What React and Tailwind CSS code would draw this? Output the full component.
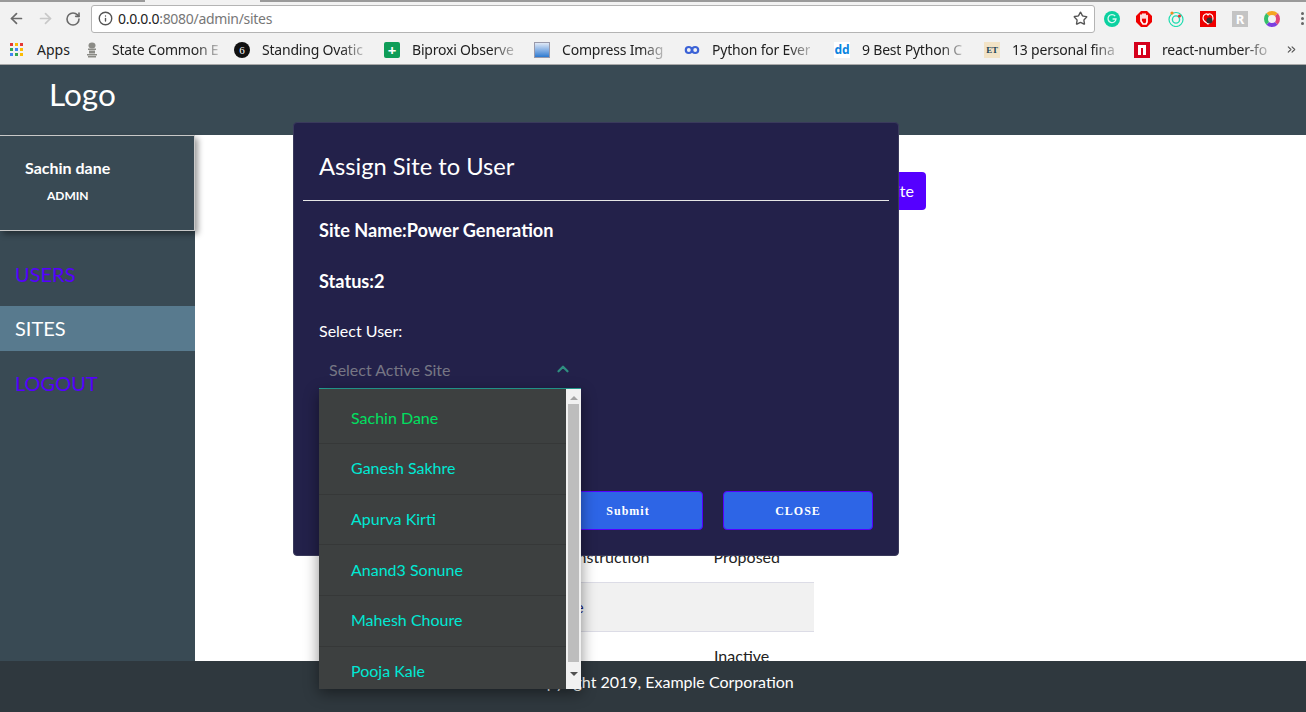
import React from 'react'
import { ArrowLeft, ArrowRight, RotateCw, Info, Star, ChevronUp, ChevronsRight } from 'lucide-react'

const bookmarks = [
  { label: 'State Common E', icon: <Emblem /> },
  { label: 'Standing Ovatic', icon: <span className="w-4 h-4 rounded-full bg-[#111] text-white text-[11px] leading-4 text-center font-['Liberation_Serif',serif]">6</span> },
  { label: 'Biproxi Observe', icon: <span className="w-4 h-4 rounded-[2px] bg-[#0f9d58] text-white text-[15px] leading-4 text-center font-bold">+</span> },
  { label: 'Compress Imag', icon: <span className="w-4 h-4 border border-[#99a] bg-gradient-to-b from-[#dfe8f5] to-[#2a7ad0]" /> },
  { label: 'Python for Ever', icon: <Loop /> },
  { label: '9 Best Python C', icon: <span className="w-4 h-4 bg-white text-[#0a84e0] text-[12px] leading-4 font-bold text-center">dd</span> },
  { label: '13 personal fina', icon: <span className="w-4 h-4 bg-[#f2e3c6] text-[#245] text-[9px] leading-4 font-bold text-center font-['Liberation_Serif',serif]">ET</span> },
  { label: 'react-number-fo', icon: <span className="w-4 h-4 bg-[#d5001c] flex items-center justify-center"><span className="w-2 h-2.5 border-x-[3px] border-t-[3px] border-white" /></span> },
]

const users = ['Ganesh Sakhre', 'Apurva Kirti', 'Anand3 Sonune', 'Mahesh Choure', 'Pooja Kale']

function Emblem() {
  return (
    <svg width="16" height="16" viewBox="0 0 16 16" fill="#8b8b86">
      <ellipse cx="8" cy="3.5" rx="3.5" ry="3" />
      <rect x="4" y="6.5" width="8" height="1.5" />
      <rect x="5" y="8.5" width="6" height="3" />
      <rect x="3" y="12" width="10" height="1.5" />
      <rect x="4" y="14" width="8" height="1.5" />
    </svg>
  )
}

function Loop() {
  return (
    <svg width="16" height="16" viewBox="0 0 16 16" fill="none" stroke="#3b62d6" strokeWidth="2.2">
      <circle cx="4.8" cy="8" r="3" />
      <circle cx="11.2" cy="8" r="3" />
    </svg>
  )
}

function AppsGrid() {
  const colors = ['#e53935', '#fbbc05', '#e53935', '#34a853', '#4285f4', '#fbbc05', '#4285f4', '#34a853', '#fbbc05']
  return (
    <span className="grid grid-cols-3 gap-[2px] w-[13px]">
      {colors.map((c, i) => (
        <span key={i} className="w-[3px] h-[3px]" style={{ backgroundColor: c }} />
      ))}
    </span>
  )
}

function Extensions() {
  return (
    <div className="flex items-center gap-[16px] ml-[9px] shrink-0">
      <svg width="16" height="16" viewBox="0 0 16 16">
        <circle cx="8" cy="8" r="8" fill="#0bd1a0" />
        <path d="M11.2 5.2A4 4 0 1 0 12 8H8.6" fill="none" stroke="#fff" strokeOpacity="0.85" strokeWidth="1.3" />
      </svg>
      <svg width="16" height="16" viewBox="0 0 16 16">
        <path d="M5 0h6l5 5v6l-5 5H5l-5-5V5z" fill="#f00000" />
        <path d="M5 7V4M7 7V3M9 7V3M11 8V4.5M5 7v3l2 3h3l1-2V8" fill="none" stroke="#fff" strokeWidth="1.7" strokeLinecap="round" />
      </svg>
      <svg width="16" height="16" viewBox="0 0 16 16" fill="none">
        <circle cx="8" cy="8.5" r="7" stroke="#20dcb0" strokeWidth="1.2" />
        <circle cx="8" cy="8.5" r="3.6" stroke="#20dcb0" strokeWidth="1.4" />
        <circle cx="4" cy="2" r="1.6" fill="#f58a1f" />
        <circle cx="11.5" cy="5" r="1.6" fill="#e53935" />
      </svg>
      <svg width="16" height="16" viewBox="0 0 16 16">
        <rect width="16" height="16" fill="#ee0000" />
        <path d="M3 7c0-4 4-5 5-3 1-2 5-1 5 3s-3 4-5 6c-2-2-5-2-5-6z" fill="none" stroke="#fff" strokeWidth="1.1" />
        <circle cx="9.5" cy="9.5" r="3" fill="#333" />
      </svg>
      <span className="w-4 h-4 bg-[#c4c4c4] text-white text-[13px] leading-4 text-center font-bold">R</span>
      <span className="w-4 h-4 rounded-full border-[4px] border-t-[#f5a623] border-r-[#e0457b] border-b-[#7b3fe0] border-l-[#35c06a]" />
    </div>
  )
}

function BrowserBar() {
  return (
    <div className="h-[65px] shrink-0 bg-[#f2f2f2] border-b border-[#a9a9a9] font-['Noto_Sans',sans-serif]">
      <div className="h-[2px] flex bg-[#9a9a9a]">
        <span className="ml-[145px] w-[115px] bg-[#f2f2f2]" />
      </div>
      <div className="h-[33px] flex items-center pl-[8px] pr-[2px]">
        <ArrowLeft size={17} className="shrink-0 text-[#6a6a6a]" strokeWidth={2.4} />
        <ArrowRight size={17} className="shrink-0 text-[#c8c8c8] ml-[12px]" strokeWidth={2.4} />
        <RotateCw size={16} className="shrink-0 text-[#6a6a6a] ml-[11px]" strokeWidth={2.4} />
        <div className="ml-[10px] h-[28px] w-[1004px] shrink-0 bg-white border border-[#b4b4b4] rounded-[3px] flex items-center pl-[6px] pr-[6px]">
          <Info size={15} className="shrink-0 text-[#555]" strokeWidth={2.2} />
          <span className="ml-[5px] text-[14px] tracking-[-0.3px] text-[#222]">0.0.0.0<span className="text-[#777]">:8080/admin/sites</span></span>
          <Star size={15} className="ml-auto text-[#555]" strokeWidth={2.2} />
        </div>
        <Extensions />
        <span className="ml-auto flex flex-col gap-[2px]">
          <span className="w-[3px] h-[3px] rounded-full bg-[#666]" />
          <span className="w-[3px] h-[3px] rounded-full bg-[#666]" />
          <span className="w-[3px] h-[3px] rounded-full bg-[#666]" />
        </span>
      </div>
      <div className="h-[29px] flex items-center pl-[10px] text-[14px] text-[#222] whitespace-nowrap">
        <AppsGrid />
        <span className="ml-[14px] w-[47px]">Apps</span>
        {bookmarks.map((b) => (
          <div key={b.label} className="w-[150px] shrink-0 flex items-center gap-[12px] tracking-[-0.2px]">
            {b.icon}
            <span className="[mask-image:linear-gradient(to_right,black_78%,transparent_108%)]">{b.label}</span>
          </div>
        ))}
        <ChevronsRight size={13} className="ml-auto mr-[8px] text-[#555]" />
      </div>
    </div>
  )
}

function Modal() {
  return (
    <div className="absolute left-[293px] top-[122px] w-[606px] h-[434px] bg-[#23214a] rounded-[4px] border border-[#3a3a5c] pt-[9px] px-[9px] text-white">
      <div className="h-[69px] border-b border-[#e6e6e6] flex items-center pl-[16px] pt-[2px] text-[23.7px]">Assign Site to User</div>
      <div className="pl-[16px]">
        <p className="mt-[18px] text-[18.15px] leading-[22px] font-bold">Site Name:Power Generation</p>
        <p className="mt-[29px] text-[18.15px] leading-[22px] font-bold">Status:2</p>
        <p className="mt-[29px] text-[16px] leading-[20px]">Select User:</p>
        <div className="mt-[10px] relative w-[262px] h-[38px] border-b border-[#26a69a] flex items-center pl-[10px] text-[16px] text-[#767684]">
          Select Active Site
          <ChevronUp size={18} strokeWidth={3} className="absolute right-[9px] top-[9px] text-[#2f8f80]" />
        </div>
      </div>
      <div className="absolute left-[259px] top-[368px] flex gap-[20px] font-['Liberation_Serif',serif] text-[12px] font-bold tracking-[1px]">
        <button className="w-[150px] h-[39px] bg-[#2d65e6] border border-[#5500ff] rounded-[4px] text-white">Submit</button>
        <button className="w-[150px] h-[39px] bg-[#2d65e6] border border-[#5500ff] rounded-[4px] text-white">CLOSE</button>
      </div>
    </div>
  )
}

function Dropdown() {
  return (
    <div className="absolute left-[319px] top-[389px] w-[262px] h-[300px] bg-[#3d4040] shadow-[0_4px_14px_rgba(0,0,0,0.45)] flex overflow-hidden text-[16px]">
      <div className="w-[247px]">
        <div className="h-[55px] border-b border-[#363838] flex items-center pl-[32px] pt-[3px] text-[#00e060]">Sachin Dane</div>
        {users.map((u) => (
          <div key={u} className="h-[50.7px] border-b border-[#363838] flex items-center pl-[32px] pb-[1px] text-[#00e8d4]">{u}</div>
        ))}
      </div>
      <div className="w-[15px] bg-[#f1f1f1] flex flex-col items-center">
        <span className="mt-[7px] w-0 h-0 border-x-[4px] border-x-transparent border-b-[4px] border-b-[#a3a3a3]" />
        <span className="mt-[4px] w-[11px] h-[258px] bg-[#bdbdbd]" />
        <span className="mt-[10px] w-0 h-0 border-x-[4px] border-x-transparent border-t-[4px] border-t-[#505050]" />
      </div>
    </div>
  )
}

export default function App() {
  return (
    <div className="relative w-[1306px] h-[712px] overflow-hidden flex flex-col bg-white font-['Lato',sans-serif]">
      <BrowserBar />
      <header className="h-[70px] shrink-0 bg-[#394a54] flex items-center pl-[49px] pb-[11px] text-[31.5px] text-white">Logo</header>
      <div className="flex-1 flex min-h-0">
        <aside className="w-[195px] h-[531px] shrink-0 bg-[#394a54]">
          <div className="h-[96px] border border-l-0 border-[#c8c8c8] shadow-[3px_3px_6px_rgba(0,0,0,0.4)] pl-[25px] pt-[22px] text-white">
            <p className="text-[16px] leading-[20px] font-bold">Sachin dane</p>
            <p className="mt-[10px] ml-[22px] text-[12px] leading-[16px] font-bold">ADMIN</p>
          </div>
          <nav className="mt-[21px] text-[20px]">
            <div className="h-[54px] flex items-center pl-[15px] pb-[10px] text-[#5500ff]">USERS</div>
            <div className="h-[45px] flex items-center pl-[15px] pb-[2px] bg-[#587a8e] text-white">SITES</div>
            <div className="h-[66px] flex items-center pl-[15px] pb-[2px] text-[#5500ff]">LOGOUT</div>
          </nav>
        </aside>
        <main className="flex-1 relative text-[16px] text-[#222]">
          <div className="absolute left-[600px] top-[37px] w-[131px] h-[38px] bg-[#5500ff] rounded-[4px] text-white flex items-center justify-end pr-[12px]">Create Site</div>
          <div className="absolute left-[225px] top-[410px] w-[394px] text-[16px]">
            <div className="h-[37px] flex items-start justify-between">
              <span className="ml-[138px]">Construction</span>
              <span className="mr-[34px]">Proposed</span>
            </div>
            <div className="h-[50px] bg-[#f1f1f1] border-y border-[#dcdce6] flex items-center pl-[137px] text-[#1a237e]">Site</div>
            <div className="pt-[12px] pl-[294px]">Inactive</div>
          </div>
        </main>
      </div>
      <footer className="absolute left-0 right-0 bottom-0 h-[51px] bg-[#2f383e] flex items-center justify-center pl-[15px] pb-[9px] text-[16px] text-white">Copyright 2019, Example Corporation</footer>
      <Modal />
      <Dropdown />
    </div>
  )
}
